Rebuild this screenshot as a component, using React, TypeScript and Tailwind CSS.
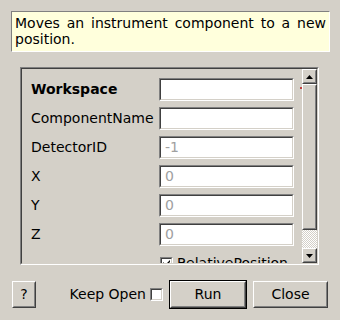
import React from "react";

const sunkenOuter = "border-t border-l border-t-[#808080] border-l-[#808080] border-b border-r border-b-white border-r-white";
const sunkenInner = "border-t border-l border-t-[#404040] border-l-[#404040] border-b border-r border-b-[#d4d0c8] border-r-[#d4d0c8]";
const raisedOuter = "border-t border-l border-t-white border-l-white border-b border-r border-b-[#404040] border-r-[#404040]";
const raisedInner = "border-b border-r border-b-[#808080] border-r-[#808080] border-t border-l border-t-[#d4d0c8] border-l-[#d4d0c8]";

function Input({ value }: { value?: string }) {
  return (
    <div className={`h-[23px] w-[135px] ${sunkenOuter}`}>
      <div className={`h-full w-full bg-white ${sunkenInner} pl-[4px] text-[#a0a0a0] leading-[19px]`}>{value}</div>
    </div>
  );
}

function Check({ checked }: { checked?: boolean }) {
  return (
    <div className={`w-[13px] h-[13px] ${sunkenOuter}`}>
      <div className={`w-full h-full bg-white ${sunkenInner} flex items-center justify-center`}>
        {checked && (
          <svg width="7" height="7" viewBox="0 0 7 7">
            <path d="M0 2 L0 4 L2 6 L3 6 L7 2 L7 0 L2.5 4.5 Z" fill="#000" />
          </svg>
        )}
      </div>
    </div>
  );
}

function Btn({ children, w, def }: { children: React.ReactNode; w: string; def?: boolean }) {
  const inner = (
    <div className={`${raisedOuter} h-full w-full`}>
      <div className={`${raisedInner} h-full w-full flex items-center justify-center text-black`}>{children}</div>
    </div>
  );
  if (def)
    return <div className={`${w} h-[29px] border border-black`}>{inner}</div>;
  return <div className={`${w} h-[27px]`}>{inner}</div>;
}

export default function App() {
  const rows: { label: string; value?: string; bold?: boolean; marker?: boolean }[] = [
    { label: "Workspace", bold: true, marker: true },
    { label: "ComponentName" },
    { label: "DetectorID", value: "-1" },
    { label: "X", value: "0" },
    { label: "Y", value: "0" },
    { label: "Z", value: "0" },
  ];
  return (
    <div
      className="w-[340px] h-[320px] bg-[#d4d0c8] text-[14px] text-black overflow-hidden flex flex-col"
      style={{ fontFamily: '"DejaVu Sans", sans-serif' }}
    >
      <div className={`ml-[11px] mt-[11px] w-[319px] h-[41px] bg-[#ffffdc] ${sunkenOuter} pl-[3px] pr-[3px] pt-[3px] leading-[16px] text-justify [text-align-last:left]`}>
        Moves an instrument component to a new position.
      </div>

      <div className={`ml-[20px] mt-[15px] w-[299px] h-[198px] ${sunkenOuter}`}>
        <div className={`w-full h-full ${sunkenInner} flex`}>
          <div className="flex-1 overflow-hidden pl-[9px] pt-[9px]">
            <div className="flex flex-col gap-[6px]">
              {rows.map((r) => (
                <div key={r.label} className="flex items-center h-[23px]">
                  <div className={`w-[128px] ${r.bold ? "font-bold" : ""}`}>{r.label}</div>
                  <div className="relative">
                    <Input value={r.value} />
                    {r.marker && <div className="absolute left-[141px] top-[9px] w-[2px] h-[2px] bg-[#c04040]" />}
                  </div>
                </div>
              ))}
              <div className="flex items-center h-[23px]">
                <div className="w-[129px]" />
                <Check checked />
                <div className="ml-[4px]">RelativePosition</div>
              </div>
            </div>
          </div>
          <div className="w-[15px] flex flex-col">
            <div className="h-[15px] w-[15px]">
              <div className={`${raisedOuter} h-full w-full`}>
                <div className={`${raisedInner} h-full w-full flex items-center justify-center bg-[#d4d0c8]`}>
                  <svg width="7" height="4" viewBox="0 0 7 4"><path d="M3.5 0 L7 4 L0 4 Z" fill="#000" /></svg>
                </div>
              </div>
            </div>
            <div className="h-[146px] w-[15px]">
              <div className={`${raisedOuter} h-full w-full`}>
                <div className={`${raisedInner} h-full w-full bg-[#d4d0c8]`} />
              </div>
            </div>
            <div className="h-[18px] w-[15px] bg-[repeating-conic-gradient(#ffffff_0_25%,#d4d0c8_0_50%)] bg-[length:2px_2px]" />
            <div className="h-[15px] w-[15px]">
              <div className={`${raisedOuter} h-full w-full`}>
                <div className={`${raisedInner} h-full w-full flex items-center justify-center bg-[#d4d0c8]`}>
                  <svg width="7" height="4" viewBox="0 0 7 4"><path d="M0 0 L7 0 L3.5 4 Z" fill="#000" /></svg>
                </div>
              </div>
            </div>
          </div>
        </div>
      </div>

      <div className="mt-[15px] ml-[12px] mr-[12px] flex items-center h-[29px]">
        <Btn w="w-[24px]">?</Btn>
        <div className="flex-1" />
        <div className="mr-[4px]">Keep Open</div>
        <Check />
        <div className="w-[6px]" />
        <Btn w="w-[78px]" def>Run</Btn>
        <div className="w-[6px]" />
        <Btn w="w-[75px]">Close</Btn>
      </div>
    </div>
  );
}
